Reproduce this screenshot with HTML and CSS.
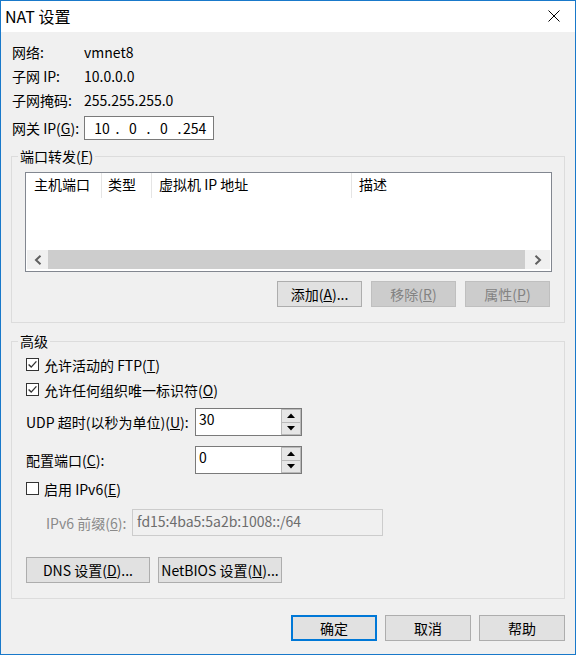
FILE: index.html
```html
<!DOCTYPE html>
<html lang="zh-CN">
<head>
<meta charset="utf-8">
<title>NAT 设置</title>
<link rel="stylesheet" href="styles.css">
</head>
<body>
<div class="window">
  <div class="titlebar">
    <span class="title">NAT 设置</span>
    <svg class="close" width="12" height="12" viewBox="0 0 12 12"><path d="M0.5 0.5L11.5 11.5M11.5 0.5L0.5 11.5" stroke="#000" stroke-width="1" fill="none"/></svg>
  </div>
  <div class="content">
    <div class="info">
      <span>网络:</span><span>vmnet8</span>
      <span>子网 IP:</span><span>10.0.0.0</span>
      <span>子网掩码:</span><span>255.255.255.0</span>
    </div>
    <div class="gateway">
      <span class="glbl">网关 IP(<u>G</u>):</span>
      <div class="ipbox">
        <span class="oct">10</span><span class="dot">.</span><span class="oct">0</span><span class="dot">.</span><span class="oct">0</span><span class="dot">.</span><span class="oct last">254<i class="caret"></i></span>
      </div>
    </div>

    <fieldset class="group g1">
      <legend>端口转发(<u>F</u>)</legend>
      <div class="list">
        <div class="lhead">
          <span class="col c1">主机端口</span><span class="col c2">类型</span><span class="col c3">虚拟机 IP 地址</span><span class="col c4">描述</span>
        </div>
        <div class="lbody"></div>
        <div class="hscroll">
          <span class="arrow aleft"><svg width="8" height="10" viewBox="0 0 8 10"><path d="M6.5 0.8L2 5L6.5 9.2" stroke="#606060" stroke-width="2" fill="none"/></svg></span>
          <span class="thumb"></span>
          <span class="arrow aright"><svg width="8" height="10" viewBox="0 0 8 10"><path d="M1.5 0.8L6 5L1.5 9.2" stroke="#606060" stroke-width="2" fill="none"/></svg></span>
        </div>
      </div>
      <div class="btnrow">
        <button class="btn">添加(<u>A</u>)...</button>
        <button class="btn" disabled>移除(<u>R</u>)</button>
        <button class="btn" disabled>属性(<u>P</u>)</button>
      </div>
    </fieldset>

    <fieldset class="group g2">
      <legend>高级</legend>
      <div class="chk"><span class="box"><svg width="11" height="11" viewBox="0 0 11 11"><path d="M1.6 5.4L4.2 8.1L9.4 2.4" stroke="#333" stroke-width="1.4" fill="none"/></svg></span><span>允许活动的 FTP(<u>T</u>)</span></div>
      <div class="chk"><span class="box"><svg width="11" height="11" viewBox="0 0 11 11"><path d="M1.6 5.4L4.2 8.1L9.4 2.4" stroke="#333" stroke-width="1.4" fill="none"/></svg></span><span>允许任何组织唯一标识符(<u>O</u>)</span></div>
      <div class="field f-udp">
        <span class="flbl">UDP 超时(以秒为单位)(<u>U</u>):</span>
        <div class="spin">
          <span class="spinval">30</span>
          <span class="spinbtns">
            <span class="sb"><svg width="8" height="5" viewBox="0 0 8 5"><path d="M0 5L4 0.5L8 5Z" fill="#000"/></svg></span>
            <span class="sb"><svg width="8" height="5" viewBox="0 0 8 5"><path d="M0 0L4 4.5L8 0Z" fill="#000"/></svg></span>
          </span>
        </div>
      </div>
      <div class="field f-port">
        <span class="flbl">配置端口(<u>C</u>):</span>
        <div class="spin">
          <span class="spinval">0</span>
          <span class="spinbtns">
            <span class="sb"><svg width="8" height="5" viewBox="0 0 8 5"><path d="M0 5L4 0.5L8 5Z" fill="#000"/></svg></span>
            <span class="sb"><svg width="8" height="5" viewBox="0 0 8 5"><path d="M0 0L4 4.5L8 0Z" fill="#000"/></svg></span>
          </span>
        </div>
      </div>
      <div class="chk c-ipv6"><span class="box"></span><span>启用 IPv6(<u>E</u>)</span></div>
      <div class="field f-prefix">
        <span class="plbl">IPv6 前缀(<u>6</u>):</span>
        <div class="pbox">fd15:4ba5:5a2b:1008::/64</div>
      </div>
      <div class="dnsrow">
        <button class="btn wide">DNS 设置(<u>D</u>)...</button>
        <button class="btn wide">NetBIOS 设置(<u>N</u>)...</button>
      </div>
    </fieldset>

    <div class="footer">
      <button class="btn fbtn default">确定</button>
      <button class="btn fbtn">取消</button>
      <button class="btn fbtn">帮助</button>
    </div>
  </div>
</div>
</body>
</html>
```
FILE: styles.css
```css
* { box-sizing: border-box; }
html, body { margin: 0; padding: 0; }
body {
  font-family: "Noto Sans CJK SC", sans-serif;
  font-size: 14px;
  color: #000;
  background: #fff;
}
.window {
  width: 576px;
  height: 655px;
  border: 1px solid #1979ca;
  background: #f0f0f0;
  display: flex;
  flex-direction: column;
  white-space: nowrap;
}
.titlebar {
  flex: none;
  height: 31px;
  background: #fff;
  display: flex;
  align-items: center;
  justify-content: space-between;
  padding: 0 15px 0 4px;
}
.title { font-size: 16px; line-height: 20px; margin-top: -1px; }
.close { display: block; margin-top: -1px; }

.content {
  padding: 8px 10px 0 10px;
  display: flex;
  flex-direction: column;
}
.info {
  display: grid;
  grid-template-columns: 72px auto;
  grid-auto-rows: 24px;
  align-items: center;
  margin-left: 1px;
  line-height: 18px;
}
.gateway {
  display: flex;
  align-items: center;
  height: 24px;
  margin: 4px 0 0 1px;
}
.glbl { width: 72px; }
.ipbox {
  width: 130px;
  height: 24px;
  border: 1px solid #7a7a7a;
  background: #fff;
  display: flex;
  align-items: center;
  padding-left: 5px;
}
.oct { width: 24px; text-align: center; line-height: 18px; }
.dot { width: 7px; text-align: center; line-height: 18px; }
.oct.last { text-align: left; display: flex; align-items: center; }
.caret {
  display: inline-block;
  width: 1px;
  height: 18px;
  background: #000;
  margin-left: 1px;
}

.group {
  margin: 8px 0 0 0;
  border: 1px solid #dcdcdc;
  padding: 8px 12px 15px 13px;
  min-width: 0;
}
.group legend {
  padding: 0 2px;
  margin-left: -7px;
  line-height: 16px;
  height: 16px;
}
.list {
  height: 100px;
  border: 1px solid #828790;
  background: #fff;
  padding: 1px;
  display: flex;
  flex-direction: column;
}
.lhead { flex: none; display: flex; height: 25px; margin-top: -1px; }
.col {
  height: 25px;
  line-height: 23px;
  padding-left: 7px;
  border-right: 1px solid #e5e5e5;
}
.c1 { width: 75px; }
.c2 { width: 50px; padding-left: 6px; }
.c3 { width: 200px; }
.c4 { flex: 1; border-right: 0; }
.lbody { flex: 1; }
.hscroll {
  flex: none;
  height: 19px;
  margin-bottom: 1px;
  display: flex;
}
.arrow {
  background: #f0f0f0;
  display: flex;
  align-items: center;
  justify-content: center;
}
.aleft { width: 21px; }
.aright { width: 25px; }
.arrow svg { display: block; }
.thumb { flex: 1; background: #cdcdcd; }

.btn {
  font: inherit;
  color: #000;
  height: 26px;
  width: 85px;
  padding: 0;
  border: 1px solid #adadad;
  background: #e1e1e1;
  line-height: 22px;
  white-space: nowrap;
}
.btn:disabled {
  background: #cccccc;
  border-color: #bfbfbf;
  color: #838383;
}
.btnrow {
  display: flex;
  justify-content: flex-end;
  gap: 9px;
  margin-top: 9px;
  padding-right: 2px;
}

.g2 { margin-top: 10px; padding: 3px 12px 15px 14px; }
.g2 legend { margin-left: -8px; }
.chk { display: flex; align-items: center; height: 25px; }
.box {
  flex: none;
  width: 13px;
  height: 13px;
  border: 1px solid #333;
  background: #fff;
  margin-right: 5px;
}
.box svg { display: block; }
.field { display: flex; align-items: center; }
.f-udp { margin-top: 6px; }
.f-port { margin-top: 10px; }
.c-ipv6 { margin-top: 2px; }
.flbl { width: 169px; flex: none; }
.spin {
  width: 107px;
  height: 28px;
  border: 1px solid #7a7a7a;
  background: #fff;
  display: flex;
}
.spinval { flex: 1; padding: 1px 0 0 3px; line-height: 18px; }
.spinbtns {
  width: 20px;
  display: flex;
  flex-direction: column;
}
.sb {
  flex: 1;
  border: 1px solid #b9b9b9;
  background: #e6e6e6;
  display: flex;
  align-items: center;
  justify-content: center;
}
.sb + .sb { border-top: 0; }
.sb svg { display: block; }

.f-prefix { margin-top: 8px; }
.plbl { width: 86px; flex: none; margin-left: 20px; color: #8a8a8a; }
.pbox {
  width: 251px;
  height: 27px;
  border: 1px solid #cccccc;
  background: #f0f0f0;
  color: #6d6d6d;
  padding: 1px 0 0 4px;
  line-height: 20px;
}
.dnsrow { display: flex; gap: 8px; margin-top: 21px; }
.btn.wide { width: 124px; }

.footer {
  display: flex;
  justify-content: flex-end;
  gap: 8px;
  margin-top: 16px;
}
.fbtn { width: 86px; }
.btn.default { border: 2px solid #0078d7; }
```
